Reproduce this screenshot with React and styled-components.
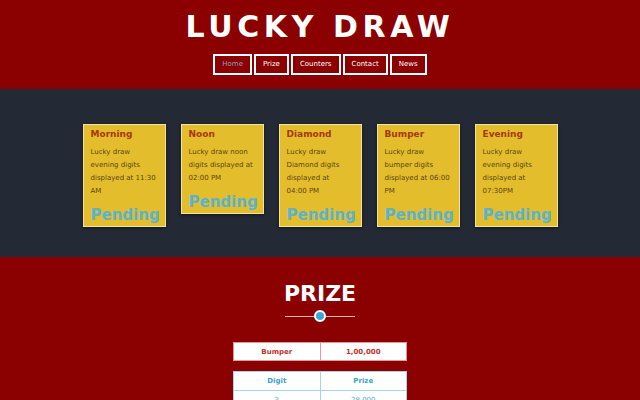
import React from "react";
import styled, { createGlobalStyle } from "styled-components";

const draws = [
  { name: "Morning", text: "Lucky draw evening digits displayed at 11:30 AM" },
  { name: "Noon", text: "Lucky draw noon digits displayed at 02:00 PM" },
  { name: "Diamond", text: "Lucky draw Diamond digits displayed at 04:00\u00a0PM" },
  { name: "Bumper", text: "Lucky draw bumper digits displayed at 06:00 PM" },
  { name: "Evening", text: "Lucky draw evening digits displayed at 07:30PM" },
];

const links = ["Home", "Prize", "Counters", "Contact", "News"];

const prizes = [
  { digit: "3", prize: "28,000" },
  { digit: "2", prize: "5,000" },
];

export default function App() {
  return (
    <>
      <GlobalStyle />
      <Header>
        <Title>LUCKY DRAW</Title>
        <Nav>
          {links.map((link, i) => (
            <NavLink key={link} href="#" $active={i === 0}>
              {link}
            </NavLink>
          ))}
        </Nav>
      </Header>
      <DrawSection>
        {draws.map((draw) => (
          <Card key={draw.name}>
            <CardTitle>{draw.name}</CardTitle>
            <CardText>{draw.text}</CardText>
            <Status>Pending</Status>
          </Card>
        ))}
      </DrawSection>
      <PrizeSection>
        <SectionTitle>PRIZE</SectionTitle>
        <Divider>
          <Dot />
        </Divider>
        <BumperTable>
          <tbody>
            <tr>
              <td>Bumper</td>
              <td>1,00,000</td>
            </tr>
          </tbody>
        </BumperTable>
        <PrizeTable>
          <thead>
            <tr>
              <th>Digit</th>
              <th>Prize</th>
            </tr>
          </thead>
          <tbody>
            {prizes.map(({ digit, prize }) => (
              <tr key={digit}>
                <td>{digit}</td>
                <td>{prize}</td>
              </tr>
            ))}
          </tbody>
        </PrizeTable>
      </PrizeSection>
    </>
  );
}

const GlobalStyle = createGlobalStyle`
  * {
    box-sizing: border-box;
  }
  body {
    margin: 0;
    font-family: "DejaVu Sans", Verdana, sans-serif;
    background: #8b0000;
  }
`;

const Header = styled.header`
  background: #8b0000;
  padding: 9px 0 14px;
  display: flex;
  flex-direction: column;
  align-items: center;
`;

const Title = styled.h1`
  margin: 0;
  color: #ffffff;
  font-size: 30px;
  line-height: 35px;
  font-weight: bold;
  letter-spacing: 4.6px;
`;

const Nav = styled.nav`
  display: flex;
  gap: 2px;
  margin-top: 10px;
`;

const NavLink = styled.a`
  display: block;
  border: 2px solid #ffffff;
  padding: 2px 7px;
  font-size: 7px;
  line-height: 13px;
  text-decoration: none;
  color: ${({ $active }) => ($active ? "#8f9fbf" : "#ffffff")};
`;

const DrawSection = styled.section`
  background: #232a36;
  padding: 35px 0 30px;
  display: flex;
  justify-content: center;
  align-items: flex-start;
  gap: 15px;
`;

const Card = styled.div`
  width: 83px;
  background: #e3bd2c;
  border: 1px solid #f3e3a0;
  box-shadow: 0 1px 3px rgba(0, 0, 0, 0.5);
  padding: 3px 6px 1px 7px;
`;

const CardTitle = styled.h3`
  margin: 0;
  font-size: 9px;
  line-height: 12px;
  font-weight: bold;
  color: #a8380f;
`;

const CardText = styled.p`
  margin: 6px 0 0;
  font-size: 7px;
  line-height: 13px;
  color: #5a4614;
`;

const Status = styled.div`
  margin-top: 7px;
  font-size: 15px;
  line-height: 20px;
  font-weight: bold;
  color: #5ab4cf;
`;

const PrizeSection = styled.section`
  background: #8b0000;
  padding: 24px 0 20px;
  display: flex;
  flex-direction: column;
  align-items: center;
`;

const SectionTitle = styled.h2`
  margin: 0;
  color: #ffffff;
  font-size: 22px;
  line-height: 26px;
  font-weight: bold;
`;

const Divider = styled.div`
  position: relative;
  width: 70px;
  height: 12px;
  margin-top: 3px;
  display: flex;
  align-items: center;
  justify-content: center;

  &::before {
    content: "";
    position: absolute;
    left: 0;
    right: 0;
    top: 5.5px;
    height: 1px;
    background: #e8b4b4;
  }
`;

const Dot = styled.span`
  position: relative;
  width: 12px;
  height: 12px;
  border-radius: 50%;
  background: #3ea6d6;
  border: 2px solid #ffffff;
`;

const BaseTable = styled.table`
  width: 174px;
  border-collapse: collapse;
  background: #ffffff;
  table-layout: fixed;

  td,
  th {
    width: 50%;
    text-align: center;
    font-size: 7px;
    padding: 0;
  }
`;

const BumperTable = styled(BaseTable)`
  margin-top: 20px;

  td {
    height: 18px;
    font-weight: bold;
    color: #c0322e;
    border: 1px solid #e29a9a;
  }
`;

const PrizeTable = styled(BaseTable)`
  margin-top: 10px;

  th {
    height: 19px;
    font-weight: bold;
    color: #3a9fcb;
    border: 1px solid #a6d5e8;
  }

  td {
    height: 18px;
    color: #5aaed2;
    border: 1px solid #a6d5e8;
  }
`;
